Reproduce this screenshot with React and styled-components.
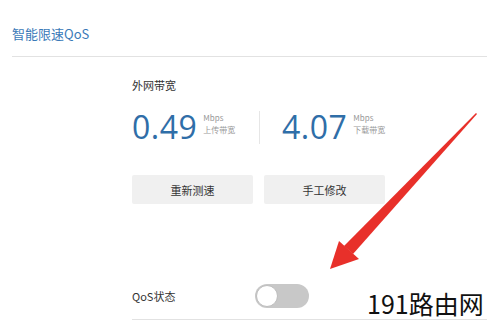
import React from "react";
import styled, {createGlobalStyle} from "styled-components";

const Global = createGlobalStyle`
  body {
    margin: 0;
    background: #fff;
    font-family: "Noto Sans CJK SC", "Noto Sans", sans-serif;
  }
`;

const Page = styled.div`
  position: relative;
  width: 487px;
  height: 323px;
  overflow: hidden;
  background: #fff;
`;

const Header = styled.div`
  margin-left: 12px;
  height: 57px;
  border-bottom: 1px solid #e2e2e2;
  box-sizing: border-box;
  padding-top: 24px;
  font-size: 13px;
  color: #3b7ab8;
  line-height: 20px;
`;

const Content = styled.div`
  margin-left: 132px;
  padding-top: 20px;
`;

const Label = styled.div`
  font-size: 11px;
  color: #333;
  line-height: 16px;
`;

const SpeedRow = styled.div`
  display: flex;
  align-items: center;
  margin-top: 17px;
  height: 34px;
`;

const Speed = styled.div`
  display: flex;
  align-items: flex-start;
  width: ${p => p.$w}px;
`;

const Value = styled.span`
  font-family: "Open Sans", "Noto Sans", sans-serif;
  font-size: 32px;
  line-height: 34px;
  color: #2f6ea8;
  letter-spacing: 0.5px;
`;

const Unit = styled.div`
  margin-left: 6px;
  margin-top: 2px;
  font-size: 8px;
  line-height: 12px;
  color: #999;
`;

const Divider = styled.div`
  width: 1px;
  height: 33px;
  background: #e6e6e6;
  margin-right: 22px;
`;

const Buttons = styled.div`
  display: flex;
  gap: 11px;
  margin-top: 31px;
`;

const Button = styled.div`
  width: 121px;
  height: 29px;
  background: #f0f0f0;
  border-radius: 2px;
  display: flex;
  align-items: center;
  justify-content: center;
  font-size: 11px;
  color: #333;
`;

const StatusRow = styled.div`
  display: flex;
  align-items: center;
  margin-top: 74px;
  height: 36px;
  border-bottom: 1px solid #e2e2e2;
  padding-bottom: 5px;
`;

const StatusLabel = styled.div`
  width: 123px;
  font-size: 11px;
  color: #333;
`;

const Toggle = styled.div`
  width: 54px;
  height: 24px;
  border-radius: 12px;
  background: #c8c8c8;
  position: relative;
  &::after {
    content: "";
    position: absolute;
    left: 1px;
    top: 1px;
    width: 20px;
    height: 20px;
    border-radius: 50%;
    background: #fff;
    border: 1px solid #bdbdbd;
  }
`;

const Watermark = styled.div`
  position: absolute;
  left: 367px;
  top: 287px;
  font-size: 25px;
  line-height: 32px;
  color: #111;
`;

const Arrow = styled.svg`
  position: absolute;
  left: 0;
  top: 0;
`;

export default function App() {
  return (
    <Page>
      <Global/>
      <Header>智能限速QoS</Header>
      <Content>
        <Label>外网带宽</Label>
        <SpeedRow>
          <Speed $w={127}>
            <Value>0.49</Value>
            <Unit>Mbps<br/>上传带宽</Unit>
          </Speed>
          <Divider/>
          <Speed $w={120}>
            <Value>4.07</Value>
            <Unit>Mbps<br/>下载带宽</Unit>
          </Speed>
        </SpeedRow>
        <Buttons>
          <Button>重新测速</Button>
          <Button>手工修改</Button>
        </Buttons>
        <StatusRow>
          <StatusLabel>QoS状态</StatusLabel>
          <Toggle/>
        </StatusRow>
      </Content>
      <Watermark>191路由网</Watermark>
      <Arrow width="487" height="323" viewBox="0 0 487 323">
        <polygon points="476,113 477,114 353,254 344,246" fill="#e8302a"/>
        <polygon points="330,269 339,241 359,259" fill="#e8302a"/>
      </Arrow>
    </Page>
  );
}
